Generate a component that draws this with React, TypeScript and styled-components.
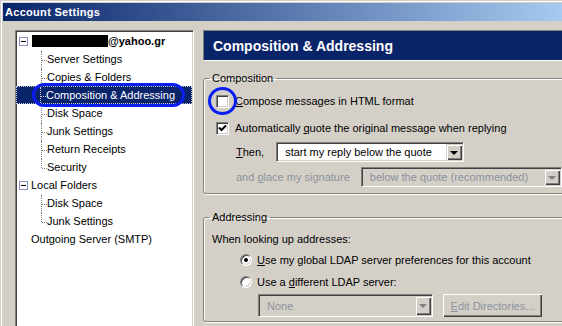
import styled, { createGlobalStyle } from 'styled-components'

const GlobalStyle = createGlobalStyle`
  html, body {
    margin: 0;
    padding: 0;
    background: #d4d0c8;
  }
  body {
    font-family: "Liberation Sans", Arial, sans-serif;
    font-size: 11px;
    color: #000;
  }
`

const Window = styled.div`
  position: relative;
  width: 562px;
  height: 326px;
  overflow: hidden;
  box-sizing: border-box;
  padding: 3px 0 0 3px;
  background: #d4d0c8;
  box-shadow: inset 1px 1px 0 #d4d0c8, inset 2px 2px 0 #fff;
`

const TitleBar = styled.div`
  height: 18px;
  display: flex;
  align-items: center;
  padding-left: 2px;
  background: linear-gradient(to right, #0a246a, #a6caf0);
  color: #fff;
  font-weight: bold;
  font-size: 11px;
  letter-spacing: 0.3px;
`

const Body = styled.div`
  display: flex;
  align-items: flex-start;
  padding: 9px 0 0 12px;
`

const TreePane = styled.div`
  width: 175px;
  height: 310px;
  flex: none;
  background: #fff;
  border: 1px solid;
  border-color: #808080 #fff #fff #808080;
  box-shadow: inset 1px 1px 0 #404040, inset -1px -1px 0 #d4d0c8;
  padding: 1px;
`

const TreeRow = styled.div<{ $selected?: boolean; $pad: number }>`
  height: 18px;
  box-sizing: border-box;
  display: flex;
  align-items: center;
  padding-left: ${p => p.$pad}px;
  white-space: nowrap;
  background: ${p => (p.$selected ? '#0a246a' : 'transparent')};
  color: ${p => (p.$selected ? '#fff' : '#000')};
  border: 1px dotted ${p => (p.$selected ? '#c8c8d8' : 'transparent')};
  margin-left: ${p => (p.$selected ? '-1px' : '0')};
`

const Twisty = styled.span<{ $gap?: number }>`
  width: 7px;
  height: 7px;
  border: 1px solid #8a8fc8;
  background: #fff;
  position: relative;
  flex: none;
  margin-right: ${p => p.$gap ?? 4}px;
  &::after {
    content: '';
    position: absolute;
    left: 1px;
    top: 3px;
    width: 5px;
    height: 1px;
    background: #000;
  }
`

const Redacted = styled.span`
  width: 76px;
  height: 12px;
  background: #000;
  flex: none;
`

const Bold = styled.span`
  font-weight: bold;
`

const Guide = styled.span<{ $last?: boolean; $light?: boolean }>`
  width: 29px;
  height: 18px;
  flex: none;
  position: relative;
  align-self: stretch;
  &::before {
    content: '';
    position: absolute;
    left: 23px;
    top: 0;
    height: ${p => (p.$last ? '9px' : '18px')};
    border-left: 1px dotted ${p => (p.$light ? '#d0d0e0' : '#808080')};
  }
  &::after {
    content: '';
    position: absolute;
    left: 24px;
    top: 9px;
    width: 5px;
    border-top: 1px dotted ${p => (p.$light ? '#d0d0e0' : '#808080')};
  }
`

const RightPane = styled.div`
  width: 380px;
  flex: none;
  margin-left: 9px;
`

const Header = styled.div`
  height: 29px;
  box-sizing: content-box;
  display: flex;
  align-items: center;
  padding-left: 9px;
  background: #0a246a;
  color: #fff;
  font-weight: bold;
  font-size: 14px;
  border: 1px solid;
  border-color: #808080 #fff #fff #808080;
`

const Group = styled.fieldset<{ $top: number }>`
  margin: ${p => p.$top}px 0 0 0;
  padding: 0;
  border: 1px solid #808080;
  border-radius: 3px;
  box-shadow: inset 1px 1px 0 #fff, 1px 1px 0 #fff;
  min-width: 0;
`

const Legend = styled.legend`
  margin-left: 5px;
  padding: 0 3px;
  line-height: 13px;
`

const GroupBody = styled.div<{ $pt: number; $pl: number; $pb: number }>`
  padding: ${p => p.$pt}px 0 ${p => p.$pb}px ${p => p.$pl}px;
  display: flex;
  flex-direction: column;
`

const Row = styled.div<{ $indent?: number; $mt?: number; $h?: number }>`
  display: flex;
  align-items: center;
  height: ${p => p.$h ?? 18}px;
  margin-left: ${p => p.$indent ?? 0}px;
  margin-top: ${p => p.$mt ?? 0}px;
  white-space: nowrap;
`

const Box = styled.span`
  width: 11px;
  height: 11px;
  flex: none;
  background: #fff;
  border: 1px solid;
  border-color: #808080 #fff #fff #808080;
  box-shadow: inset 1px 1px 0 #404040, inset -1px -1px 0 #d4d0c8;
  display: flex;
  align-items: center;
  justify-content: center;
  margin-right: 6px;
`

const Radio = styled.span<{ $on?: boolean }>`
  width: 10px;
  height: 10px;
  flex: none;
  border-radius: 50%;
  background: #fff;
  border: 1px solid;
  border-color: #808080 #fff #fff #808080;
  box-shadow: inset 1px 1px 0 #404040, inset -1px -1px 0 #d4d0c8;
  display: flex;
  align-items: center;
  justify-content: center;
  margin-right: 5px;
  &::after {
    content: '';
    width: 4px;
    height: 4px;
    border-radius: 50%;
    background: ${p => (p.$on ? '#000' : 'transparent')};
  }
`

const Label = styled.span<{ $disabled?: boolean; $gap?: number }>`
  color: ${p => (p.$disabled ? '#8c929c' : '#000')};
  margin-right: ${p => p.$gap ?? 0}px;
`

const Key = styled.u`
  text-decoration-thickness: 1px;
  text-underline-offset: 1px;
`

const Select = styled.div<{ $w: number; $h?: number; $disabled?: boolean }>`
  width: ${p => p.$w}px;
  height: ${p => p.$h ?? 20}px;
  box-sizing: border-box;
  flex: none;
  display: flex;
  align-items: stretch;
  background: ${p => (p.$disabled ? '#d4d0c8' : '#fff')};
  color: ${p => (p.$disabled ? '#8c929c' : '#000')};
  border: 1px solid;
  border-color: #808080 #fff #fff #808080;
  box-shadow: inset 1px 1px 0 #404040, inset -1px -1px 0 #d4d0c8;
  padding: 1px;
`

const SelectText = styled.span`
  flex: 1;
  display: flex;
  align-items: center;
  padding-left: 7px;
`

const ArrowButton = styled.span<{ $disabled?: boolean }>`
  width: 16px;
  flex: none;
  background: #d4d0c8;
  box-shadow: inset 1px 1px 0 #d4d0c8, inset 2px 2px 0 #fff, inset -1px -1px 0 #404040,
    inset -2px -2px 0 #808080;
  display: flex;
  align-items: center;
  justify-content: center;
  &::after {
    content: '';
    width: 0;
    height: 0;
    border-left: 4px solid transparent;
    border-right: 4px solid transparent;
    border-top: 4px solid ${p => (p.$disabled ? '#808080' : '#000')};
    margin-top: 1px;
  }
`

const Button = styled.div<{ $disabled?: boolean }>`
  width: 99px;
  height: 23px;
  box-sizing: border-box;
  margin-left: 10px;
  display: flex;
  align-items: center;
  justify-content: center;
  background: #d4d0c8;
  color: ${p => (p.$disabled ? '#8c929c' : '#000')};
  box-shadow: inset 1px 1px 0 #fff, inset -1px -1px 0 #404040, inset -2px -2px 0 #808080;
`

const Ring = styled.div<{ $x: number; $y: number; $w: number; $h: number; $r: string }>`
  position: absolute;
  left: ${p => p.$x}px;
  top: ${p => p.$y}px;
  width: ${p => p.$w}px;
  height: ${p => p.$h}px;
  box-sizing: border-box;
  border: 3px solid #0a1ef0;
  border-radius: ${p => p.$r};
  pointer-events: none;
`

const Check = () => (
  <svg width="9" height="9" viewBox="0 0 9 9">
    <path d="M1 3.5 L3.5 6 L8 1.5" fill="none" stroke="#000" strokeWidth="2" />
  </svg>
)

type Child = { label: string; selected?: boolean }

const accountChildren: Child[] = [
  { label: 'Server Settings' },
  { label: 'Copies & Folders' },
  { label: 'Composition & Addressing', selected: true },
  { label: 'Disk Space' },
  { label: 'Junk Settings' },
  { label: 'Return Receipts' },
  { label: 'Security' },
]

const localChildren: Child[] = [{ label: 'Disk Space' }, { label: 'Junk Settings' }]

const Children = ({ items }: { items: Child[] }) => (
  <>
    {items.map((c, i) => (
      <TreeRow key={c.label + i} $pad={0} $selected={c.selected}>
        <Guide $last={i === items.length - 1} $light={c.selected} />
        {c.label}
      </TreeRow>
    ))}
  </>
)

export default function App() {
  return (
    <Window>
      <GlobalStyle />
      <TitleBar>Account Settings</TitleBar>
      <Body>
        <TreePane>
          <TreeRow $pad={1}>
            <Twisty />
            <Redacted />
            <Bold>@yahoo.gr</Bold>
          </TreeRow>
          <Children items={accountChildren} />
          <TreeRow $pad={1}>
            <Twisty $gap={3} />
            Local Folders
          </TreeRow>
          <Children items={localChildren} />
          <TreeRow $pad={13}>Outgoing Server (SMTP)</TreeRow>
        </TreePane>

        <RightPane>
          <Header>Composition &amp; Addressing</Header>

          <Group $top={11}>
            <Legend>Composition</Legend>
            <GroupBody $pt={7} $pl={12} $pb={6}>
              <Row>
                <Box />
                <Label>
                  <Key>C</Key>ompose messages in HTML format
                </Label>
              </Row>
              <Row $mt={9}>
                <Box>
                  <Check />
                </Box>
                <Label>
                  Automatically <Key>q</Key>uote the original message when replying
                </Label>
              </Row>
              <Row $indent={20} $mt={5} $h={20}>
                <Label $gap={12}>
                  <Key>T</Key>hen,
                </Label>
                <Select $w={188}>
                  <SelectText>start my reply below the quote</SelectText>
                  <ArrowButton />
                </Select>
              </Row>
              <Row $indent={20} $mt={5} $h={20}>
                <Label $disabled $gap={11}>
                  and <Key>p</Key>lace my signature
                </Label>
                <Select $w={201} $disabled>
                  <SelectText>below the quote (recommended)</SelectText>
                  <ArrowButton $disabled />
                </Select>
              </Row>
            </GroupBody>
          </Group>

          <Group $top={17}>
            <Legend>Addressing</Legend>
            <GroupBody $pt={8} $pl={8} $pb={4}>
              <Row $h={14}>
                <Label>When looking up addresses:</Label>
              </Row>
              <Row $indent={28} $mt={5}>
                <Radio $on />
                <Label>
                  <Key>U</Key>se my global LDAP server preferences for this account
                </Label>
              </Row>
              <Row $indent={28} $mt={4}>
                <Radio />
                <Label>
                  Use a <Key>d</Key>ifferent LDAP server:
                </Label>
              </Row>
              <Row $indent={46} $mt={3} $h={23}>
                <Select $w={175} $h={23} $disabled>
                  <SelectText>None</SelectText>
                  <ArrowButton $disabled />
                </Select>
                <Button $disabled>
                  <span>
                    <Key>E</Key>dit Directories...
                  </span>
                </Button>
              </Row>
            </GroupBody>
          </Group>
        </RightPane>
      </Body>

      <Ring $x={32} $y={83} $w={153} $h={24} $r="12px" />
      <Ring $x={208} $y={87} $w={29} $h={28} $r="50%" />
    </Window>
  )
}
